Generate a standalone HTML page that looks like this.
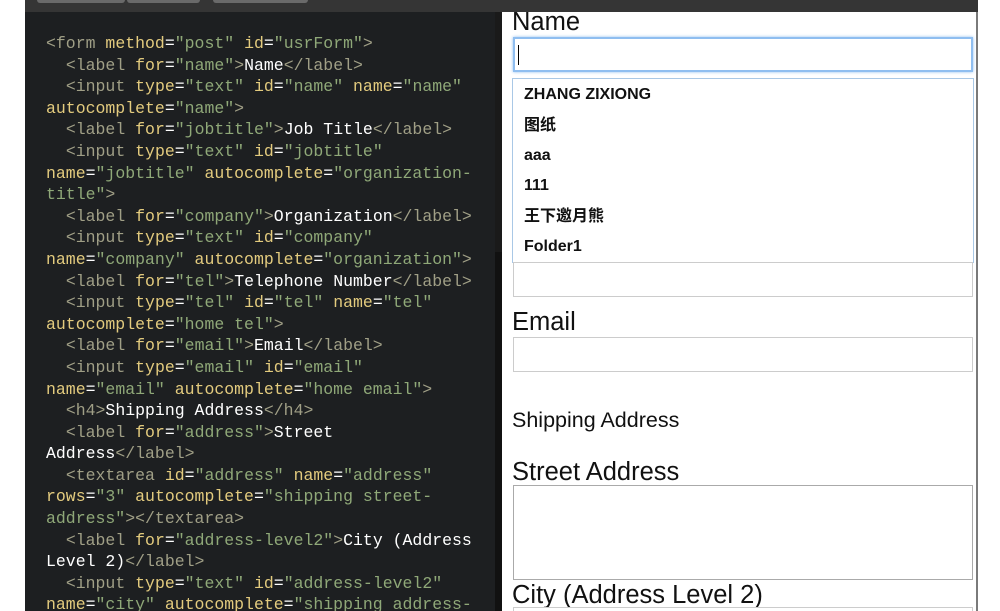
<!DOCTYPE html>
<html><head><meta charset="utf-8"><style>
*{margin:0;padding:0;box-sizing:border-box}
html,body{width:1000px;height:611px;overflow:hidden}
body{background:#fff;position:relative;font-family:"Liberation Sans","Noto Sans CJK SC",sans-serif}
.top{position:absolute;left:25px;top:0;width:953px;height:12px;background:#353535}
.btn{position:absolute;top:0;height:3px;background:#6a6a6a;border-radius:0 0 3px 3px}
.ed{position:absolute;left:25px;top:12px;width:470px;height:599px;background:#1d1f21}
.sb{position:absolute;left:495px;top:12px;width:7px;height:599px;background:#111}
.sbt{position:absolute;left:495px;top:12px;width:7px;height:240px;background:#1a1a1a}
pre{position:absolute;left:46px;top:33px;width:440px;font-family:"Liberation Mono",monospace;font-size:16.5px;line-height:21.6px;color:#fff;white-space:pre-wrap}
.t{color:#a09f86}.a{color:#e3cb7e}.s{color:#8fa878}
.rp{position:absolute;left:502px;top:12px;width:475px;height:599px;background:#fff}
.bd{position:absolute;left:976px;top:12px;width:2px;height:599px;background:#7a7a7a}
.l{position:absolute;left:512px;font-size:25.5px;color:#111;line-height:1;white-space:nowrap}
.in{position:absolute;left:513px;width:460px;border:1px solid #ccc;background:#fff}
.dd{position:absolute;left:512px;top:78px;width:462px;height:185px;border:1px solid #a9c8e6;background:#fff}
.it{position:absolute;left:11px;font-weight:bold;font-size:16px;color:#111;line-height:20px;height:20px}
</style></head><body>
<div class="top"><div class="btn" style="left:12px;width:88px"></div><div class="btn" style="left:102px;width:73px"></div><div class="btn" style="left:188px;width:95px"></div></div>
<div class="ed"></div><div class="sb"></div><div class="sbt"></div>
<pre><span class="t">&lt;form</span> <span class="a">method</span>=<span class="s">"post"</span> <span class="a">id</span>=<span class="s">"usrForm"</span><span class="t">&gt;</span>
  <span class="t">&lt;label</span> <span class="a">for</span>=<span class="s">"name"</span><span class="t">&gt;</span>Name<span class="t">&lt;/label&gt;</span>
  <span class="t">&lt;input</span> <span class="a">type</span>=<span class="s">"text"</span> <span class="a">id</span>=<span class="s">"name"</span> <span class="a">name</span>=<span class="s">"name"</span>
<span class="a">autocomplete</span>=<span class="s">"name"</span><span class="t">&gt;</span>
  <span class="t">&lt;label</span> <span class="a">for</span>=<span class="s">"jobtitle"</span><span class="t">&gt;</span>Job Title<span class="t">&lt;/label&gt;</span>
  <span class="t">&lt;input</span> <span class="a">type</span>=<span class="s">"text"</span> <span class="a">id</span>=<span class="s">"jobtitle"</span>
<span class="a">name</span>=<span class="s">"jobtitle"</span> <span class="a">autocomplete</span>=<span class="s">"organization-</span>
<span class="s">title"</span><span class="t">&gt;</span>
  <span class="t">&lt;label</span> <span class="a">for</span>=<span class="s">"company"</span><span class="t">&gt;</span>Organization<span class="t">&lt;/label&gt;</span>
  <span class="t">&lt;input</span> <span class="a">type</span>=<span class="s">"text"</span> <span class="a">id</span>=<span class="s">"company"</span>
<span class="a">name</span>=<span class="s">"company"</span> <span class="a">autocomplete</span>=<span class="s">"organization"</span><span class="t">&gt;</span>
  <span class="t">&lt;label</span> <span class="a">for</span>=<span class="s">"tel"</span><span class="t">&gt;</span>Telephone Number<span class="t">&lt;/label&gt;</span>
  <span class="t">&lt;input</span> <span class="a">type</span>=<span class="s">"tel"</span> <span class="a">id</span>=<span class="s">"tel"</span> <span class="a">name</span>=<span class="s">"tel"</span>
<span class="a">autocomplete</span>=<span class="s">"home tel"</span><span class="t">&gt;</span>
  <span class="t">&lt;label</span> <span class="a">for</span>=<span class="s">"email"</span><span class="t">&gt;</span>Email<span class="t">&lt;/label&gt;</span>
  <span class="t">&lt;input</span> <span class="a">type</span>=<span class="s">"email"</span> <span class="a">id</span>=<span class="s">"email"</span>
<span class="a">name</span>=<span class="s">"email"</span> <span class="a">autocomplete</span>=<span class="s">"home email"</span><span class="t">&gt;</span>
  <span class="t">&lt;h4&gt;</span>Shipping Address<span class="t">&lt;/h4&gt;</span>
  <span class="t">&lt;label</span> <span class="a">for</span>=<span class="s">"address"</span><span class="t">&gt;</span>Street
Address<span class="t">&lt;/label&gt;</span>
  <span class="t">&lt;textarea</span> <span class="a">id</span>=<span class="s">"address"</span> <span class="a">name</span>=<span class="s">"address"</span>
<span class="a">rows</span>=<span class="s">"3"</span> <span class="a">autocomplete</span>=<span class="s">"shipping street-</span>
<span class="s">address"</span><span class="t">&gt;&lt;/textarea&gt;</span>
  <span class="t">&lt;label</span> <span class="a">for</span>=<span class="s">"address-level2"</span><span class="t">&gt;</span>City (Address
Level 2)<span class="t">&lt;/label&gt;</span>
  <span class="t">&lt;input</span> <span class="a">type</span>=<span class="s">"text"</span> <span class="a">id</span>=<span class="s">"address-level2"</span>
<span class="a">name</span>=<span class="s">"city"</span> <span class="a">autocomplete</span>=<span class="s">"shipping address-</span></pre>
<div class="rp"></div><div class="bd"></div>
<div class="l" style="top:10px">Name</div>
<div class="in" style="top:37px;height:35px;border:2px solid #8fbef0;box-shadow:0 0 3px #8fbef0"><div style="position:absolute;left:3px;top:6px;width:1px;height:20px;background:#000"></div></div>
<div class="dd">
<div class="it" style="top:6px">ZHANG ZIXIONG</div>
<div class="it" style="top:37px">图纸</div>
<div class="it" style="top:67px">aaa</div>
<div class="it" style="top:97px">111</div>
<div class="it" style="top:128px">王下邀月熊</div>
<div class="it" style="top:158px">Folder1</div>
</div>
<div class="in" style="top:262px;height:35px"></div>
<div class="l" style="top:310px">Email</div>
<div class="in" style="top:337px;height:35px"></div>
<div class="l" style="top:410px;font-size:21.5px">Shipping Address</div>
<div class="l" style="top:460px">Street Address</div>
<div class="in" style="top:485px;height:95px;border-color:#aaa"></div>
<div class="l" style="top:583px">City (Address Level 2)</div>
<div class="in" style="top:607px;height:30px"></div>
</body></html>
